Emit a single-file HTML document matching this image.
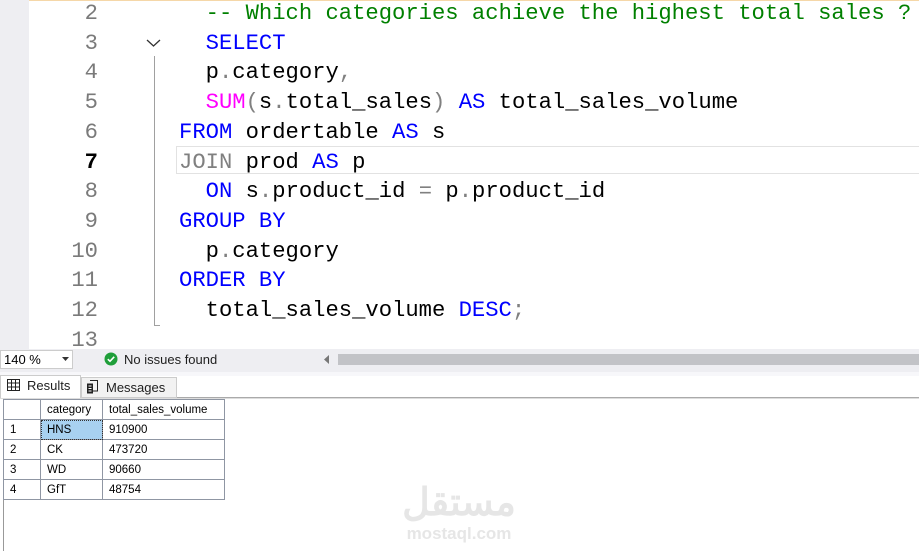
<!DOCTYPE html>
<html><head><meta charset="utf-8"><style>
body{margin:0;width:919px;height:551px;overflow:hidden;background:#fff;position:relative;font-family:"Liberation Sans",sans-serif}
.gut{position:absolute;left:0;top:0;width:29px;height:349px;background:#eeeef2}
.code{position:absolute;left:0;top:-1px;font-family:"Liberation Mono",monospace;font-size:22.2px;line-height:29.7px;white-space:pre}
.ln{position:absolute;left:40px;width:58px;text-align:right;color:#7a7a7a}
.tx{position:absolute;left:179px}
.k{color:#0000ff}.c{color:#008000}.m{color:#ff00ff}.g{color:#808080}
.sb{position:absolute;left:0;top:349px;width:919px;height:23px;background:#eeeef2}
.tab{position:absolute;font-size:13px;color:#1e1e1e}
table{position:absolute;left:3px;top:399px;border-collapse:collapse;font-size:11.5px}
td{border:1px solid #8f96a3;height:19px;padding:0 0 0 6px;color:#000}
</style></head><body>
<div style="position:absolute;left:0;top:0;width:919px;height:1px;background:#f5d7a8"></div>
<div class="gut"></div>
<div style="position:absolute;left:176px;top:146px;width:743px;height:28px;border:1px solid #e2e2e2;border-right:none;box-sizing:border-box"></div>
<div style="position:absolute;left:154px;top:56px;width:1px;height:270px;background:#a0a0a0"></div>
<div style="position:absolute;left:154px;top:325px;width:6px;height:1px;background:#a0a0a0"></div>
<svg style="position:absolute;left:146px;top:38px" width="16" height="10"><path d="M1 2 L7.5 8 L14 2" fill="none" stroke="#333" stroke-width="1.3"/></svg>
<div class="code">
<div class="ln" style="top:0">2</div><div class="tx" style="top:0">  <span class="c">-- Which categories achieve the highest total sales ?</span></div>
<div class="ln" style="top:29.7px">3</div><div class="tx" style="top:29.7px">  <span class="k">SELECT</span></div>
<div class="ln" style="top:59.4px">4</div><div class="tx" style="top:59.4px">  p<span class="g">.</span>category<span class="g">,</span></div>
<div class="ln" style="top:89.1px">5</div><div class="tx" style="top:89.1px">  <span class="m">SUM</span><span class="g">(</span>s<span class="g">.</span>total_sales<span class="g">)</span> <span class="k">AS</span> total_sales_volume</div>
<div class="ln" style="top:118.8px">6</div><div class="tx" style="top:118.8px"><span class="k">FROM</span> ordertable <span class="k">AS</span> s</div>
<div class="ln" style="top:148.5px;color:#000;font-weight:bold">7</div><div class="tx" style="top:148.5px"><span class="g">JOIN</span> prod <span class="k">AS</span> p</div>
<div class="ln" style="top:178.2px">8</div><div class="tx" style="top:178.2px">  <span class="k">ON</span> s<span class="g">.</span>product_id <span class="g">=</span> p<span class="g">.</span>product_id</div>
<div class="ln" style="top:207.9px">9</div><div class="tx" style="top:207.9px"><span class="k">GROUP BY</span></div>
<div class="ln" style="top:237.6px">10</div><div class="tx" style="top:237.6px">  p<span class="g">.</span>category</div>
<div class="ln" style="top:267.3px">11</div><div class="tx" style="top:267.3px"><span class="k">ORDER BY</span></div>
<div class="ln" style="top:297px">12</div><div class="tx" style="top:297px">  total_sales_volume <span class="k">DESC</span><span class="g">;</span></div>
<div class="ln" style="top:326.7px">13</div>
</div>
<div class="sb"></div>
<div style="position:absolute;left:0;top:350px;width:73px;height:19px;background:#fff;border:1px solid #ccc;box-sizing:border-box;font-size:13px;line-height:17px;padding-left:3px">140 %</div>
<svg style="position:absolute;left:62px;top:357px" width="8" height="5"><path d="M0 0H7L3.5 4Z" fill="#333"/></svg>
<svg style="position:absolute;left:104px;top:352px" width="14" height="14"><circle cx="7" cy="7" r="6.5" fill="#1f9e3a"/><path d="M3.8 7.2L6 9.3 10.2 4.8" fill="none" stroke="#fff" stroke-width="1.6"/></svg>
<div class="tab" style="left:124px;top:352px">No issues found</div>
<svg style="position:absolute;left:324px;top:355px" width="6" height="9"><path d="M5 0V9L0 4.5Z" fill="#777"/></svg>
<div style="position:absolute;left:338px;top:354px;width:581px;height:11px;background:#c2c3c7"></div>
<div style="position:absolute;left:0;top:372px;width:919px;height:4px;background:#f7f7fa"></div>
<div style="position:absolute;left:0;top:375px;width:81px;height:24px;background:#fff;border:1px solid #ccc;border-bottom:none;box-sizing:border-box"></div>
<svg style="position:absolute;left:7px;top:379px" width="13" height="12"><path d="M0.5 0.5H12.5V11.5H0.5ZM0.5 4H12.5M0.5 8H12.5M4.5 0.5V11.5M8.5 0.5V11.5" fill="none" stroke="#222"/></svg>
<div class="tab" style="left:27px;top:378px">Results</div>
<div style="position:absolute;left:81px;top:377px;width:96px;height:21px;background:#f2f2f2;border:1px solid #ccc;box-sizing:border-box"></div>
<svg style="position:absolute;left:85px;top:380px" width="13" height="14"><path d="M2 3.5H8V13.5H2Z" fill="#222"/><path d="M5 0.5H12.5V11H8" fill="none" stroke="#222"/><path d="M3.5 6H6.5M3.5 8.5H6.5M3.5 11H6.5" stroke="#fff"/></svg>
<div class="tab" style="left:106px;top:380px">Messages</div>
<div style="position:absolute;left:177px;top:397px;width:742px;height:1px;background:#aaa"></div>
<div style="position:absolute;left:0;top:398px;width:919px;height:1px;background:#ddd"></div>
<div style="position:absolute;left:3px;top:399px;width:1px;height:152px;background:#999"></div>
<table>
<tr><td style="width:30px"></td><td style="width:55px">category</td><td style="width:115px">total_sales_volume</td></tr>
<tr><td>1</td><td style="background:#a8d1f0;outline:1px dotted #333;outline-offset:-1px">HNS</td><td>910900</td></tr>
<tr><td>2</td><td>CK</td><td>473720</td></tr>
<tr><td>3</td><td>WD</td><td>90660</td></tr>
<tr><td>4</td><td>GfT</td><td>48754</td></tr>
</table>
<div style="position:absolute;left:400px;top:482px;width:118px;text-align:center;color:#e6e6e6;font-family:'Liberation Sans','Noto Sans CJK SC',sans-serif;font-weight:bold">
<div style="font-size:38px;line-height:42px">مستقل</div>
<div style="font-size:17px;line-height:20px">mostaql.com</div></div>
</body></html>
